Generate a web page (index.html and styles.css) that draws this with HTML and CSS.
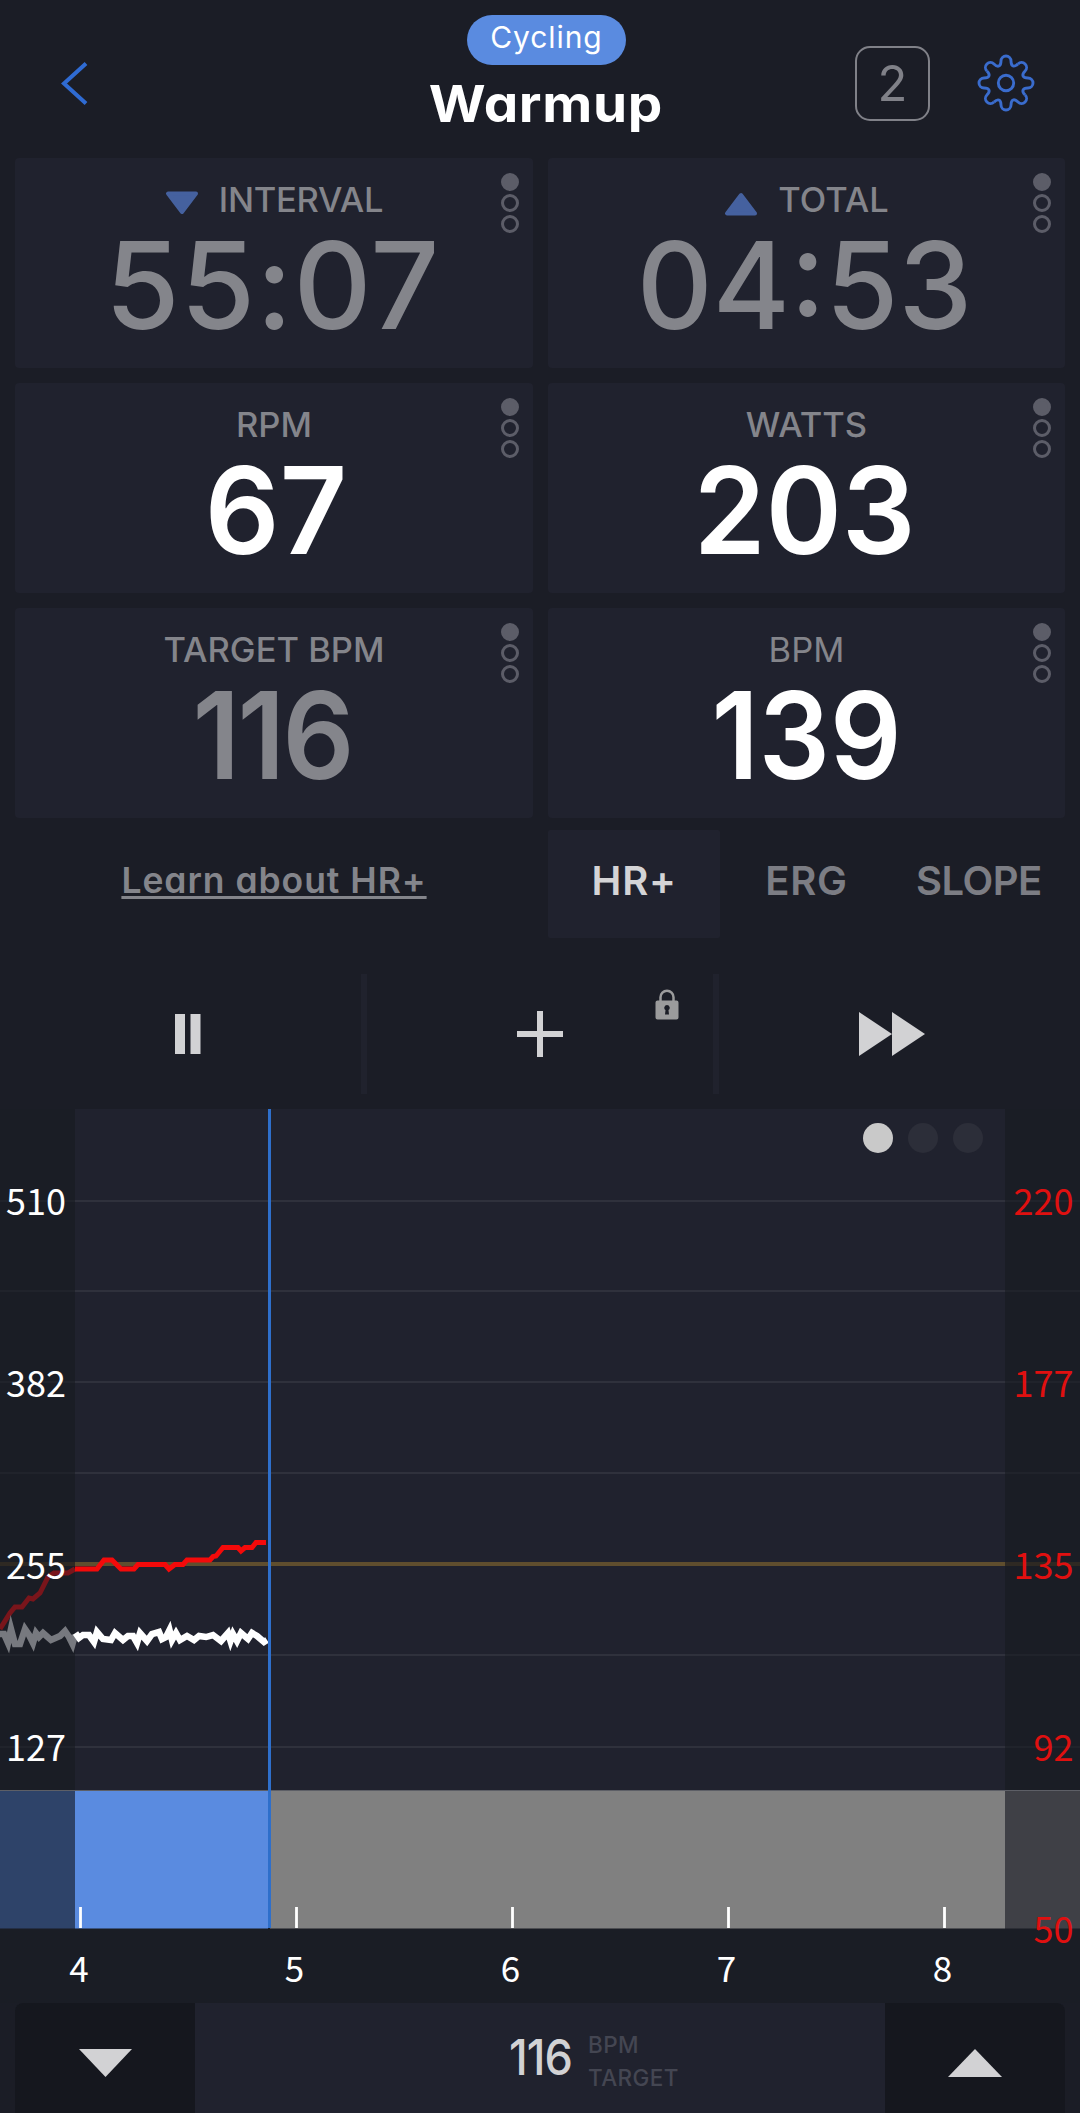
FILE: index.html
```
<!DOCTYPE html>
<html lang="en">
<head>
<meta charset="utf-8">
<title>Warmup</title>
<link rel="stylesheet" href="styles.css">
</head>
<body>
<div class="app">
  <header class="header">
    <div class="back">
      <svg width="32" height="46" viewBox="0 0 32 46"><path d="M29 3.500 7 23.500l22 20" class="chevron"/></svg>
    </div>
    <div class="title">
      <span class="pill"><span class="pill-text">Cycling</span></span>
      <h1>Warmup</h1>
    </div>
    <div class="tools">
      <div class="count">2</div>
      <svg class="gear" width="62" height="62" viewBox="-31 -31 62 62">
        <defs><path id="tooth" d="M-5-22A5 5 0 0 1 5-22C5-16.5 8.1-15.2 12-19.1"/></defs>
        <use href="#tooth"/><use href="#tooth" transform="rotate(45)"/>
        <use href="#tooth" transform="rotate(90)"/><use href="#tooth" transform="rotate(135)"/>
        <use href="#tooth" transform="rotate(180)"/><use href="#tooth" transform="rotate(225)"/>
        <use href="#tooth" transform="rotate(270)"/><use href="#tooth" transform="rotate(315)"/>
        <circle r="7.7"/>
      </svg>
    </div>
  </header>

  <main class="metrics">
    <section class="card">
      <div class="label"><svg class="tri" width="34" height="24" viewBox="0 0 34 24"><path d="M3 2.5H31L17 21Z"/></svg><span class="l-interval">INTERVAL</span></div>
      <div class="value time t-interval">55:07</div>
      <div class="pager"><i class="on"></i><i></i><i></i></div>
    </section>
    <section class="card">
      <div class="label"><svg class="tri up" width="34" height="24" viewBox="0 0 34 24"><path d="M3 21.5H31L17 3Z"/></svg><span class="l-total">TOTAL</span></div>
      <div class="value time t-total">04:53</div>
      <div class="pager"><i class="on"></i><i></i><i></i></div>
    </section>
    <section class="card">
      <div class="label">RPM</div>
      <div class="value v-rpm">67</div>
      <div class="pager"><i class="on"></i><i></i><i></i></div>
    </section>
    <section class="card">
      <div class="label">WATTS</div>
      <div class="value v-watts">203</div>
      <div class="pager"><i class="on"></i><i></i><i></i></div>
    </section>
    <section class="card">
      <div class="label">TARGET BPM</div>
      <div class="value muted v-target">116</div>
      <div class="pager"><i class="on"></i><i></i><i></i></div>
    </section>
    <section class="card">
      <div class="label light">BPM</div>
      <div class="value v-bpm">139</div>
      <div class="pager"><i class="on"></i><i></i><i></i></div>
    </section>
  </main>

  <div class="modes">
    <div class="learn"><a>Learn about HR+</a></div>
    <nav class="tabs">
      <div class="tab active">HR+</div>
      <div class="tab">ERG</div>
      <div class="tab slope">SLOPE</div>
    </nav>
  </div>

  <div class="controls">
    <div class="control"><svg width="26" height="40" viewBox="0 0 26 40"><path d="M0 0h10v40H0zM15.500 0h10v40h-10z"/></svg></div>
    <div class="control">
      <svg width="46" height="46" viewBox="0 0 46 46"><path d="M20 0h6v20h20v6H26v20h-6V26H0v-6h20z"/></svg>
      <svg class="lock" width="24" height="32" viewBox="0 0 24 32">
        <path class="shackle" d="M5.500 13V8.200a6.500 6.500 0 0 1 13 0V13"/>
        <path fill-rule="evenodd" d="M2.500 11.500h19a2 2 0 0 1 2 2v15a2 2 0 0 1-2 2h-19a2 2 0 0 1-2-2v-15a2 2 0 0 1 2-2zM12 16a2.800 2.800 0 0 0-1.500 5.100L10 25.500h4l-.5-4.400A2.800 2.800 0 0 0 12 16z"/>
      </svg>
    </div>
    <div class="control"><svg width="66" height="44" viewBox="0 0 66 44"><path d="M0 0 33 22 0 44zM33 0 66 22 33 44z"/></svg></div>
  </div>

  <svg class="chart" width="1080" height="894" viewBox="0 1109 1080 894">
    <rect class="plot" x="75" y="1109" width="930" height="681"/>
    <path class="grid side" d="M0 1201H75M0 1291H75M0 1382H75M0 1473H75M0 1655H75M0 1747H75M1005 1201h75M1005 1291h75M1005 1382h75M1005 1473h75M1005 1655h75M1005 1747h75"/>
    <path class="grid" d="M75 1201H1005M75 1291H1005M75 1382H1005M75 1473H1005M75 1655H1005M75 1747H1005"/>
    <path class="target side" d="M0 1564H75M1005 1564h75"/>
    <path class="target" d="M75 1564H1005"/>
    <rect x="0" y="1790" width="75" height="138.500" fill="#2e4369"/>
    <rect x="75" y="1790" width="193" height="138.500" fill="#5a8be0"/>
    <rect x="270" y="1790" width="735" height="138.500" fill="#808080"/>
    <rect x="1005" y="1790" width="75" height="138.500" fill="#3f4046"/>
    <path class="edge" d="M0 1790.500H1080"/>
    <path class="ticks" d="M80.500 1907v21M296.500 1907v21M512.500 1907v21M728.500 1907v21M944.500 1907v21"/>
    <path class="hr past" d="M0 1629 10 1613 15 1607H22L29 1598 33 1599 40 1593 48 1577 54 1573H68L75 1569"/>
    <path class="hr" d="M75 1569H97L104 1560H112L121 1569H134L138 1564.500H165L169 1569 175 1564.500H183L187 1560H210L213 1556.500 216 1556 223 1547.500H238L241 1551 245 1547.500H252L256 1542.500H266"/>
    <path class="power past" d="M0 1634H4L8 1643 11 1629 15 1644H20L25 1629 29 1635 33 1643 36 1633 39 1637 43 1633 51 1640 60 1636 65 1631 69 1637 72.500 1644 75 1635"/>
    <path class="power" d="M75.500 1633 79 1638 83 1635H89L94 1642 97 1632 103 1639 111 1640 115 1633 123 1640 128 1636H133L137 1643 140 1633 147 1641 152 1634 159 1632 162 1639 166 1637 169.500 1630 172 1640 176 1633 180 1640 187 1636 194 1640 199 1636 206 1637 213 1635 221 1641 228 1633 230.500 1641 233 1634 237 1641 241 1633 248 1639 252 1633 257 1636 264 1642 267 1640"/>
    <path class="now" d="M269.500 1109V1928"/>
    <circle cx="878" cy="1138" r="15" fill="#c9c9c9"/>
    <circle cx="923" cy="1138" r="15" fill="#2c2e39"/>
    <circle cx="968" cy="1138" r="15" fill="#2c2e39"/>
    <g class="axis">
      <text x="6" y="1215">510</text><text x="6" y="1397">382</text>
      <text x="6" y="1579">255</text><text x="6" y="1761">127</text>
    </g>
    <g class="axis right">
      <text x="1073.500" y="1215">220</text><text x="1073.500" y="1397">177</text>
      <text x="1073.500" y="1579">135</text><text x="1073.500" y="1761">92</text>
      <text x="1073.500" y="1943">50</text>
    </g>
    <g class="axis minutes">
      <text x="79" y="1982">4</text><text x="294.500" y="1982">5</text>
      <text x="510.500" y="1982">6</text><text x="726.500" y="1982">7</text>
      <text x="942.500" y="1982">8</text>
    </g>
  </svg>

  <footer class="adjust">
    <div class="step"><svg width="53" height="28" viewBox="0 0 53 28"><path d="M0 0H53L26.500 28Z"/></svg></div>
    <div class="reading">
      <span class="amount">116</span>
      <span class="unit"><span>BPM</span><span>TARGET</span></span>
    </div>
    <div class="step"><svg width="54" height="28" viewBox="0 0 54 28"><path d="M0 28H54L27 0Z"/></svg></div>
  </footer>
</div>
</body>
</html>
```
FILE: styles.css
```
* { box-sizing: border-box; }
body {
  margin: 0;
  background: #1b1d26;
  color: #fff;
  font-family: Inter, "Open Sans", sans-serif;
  font-feature-settings: "cv11" 1;
}
.app { width: 1080px; height: 2113px; overflow: hidden; display: flex; flex-direction: column; }
svg { display: block; flex: none; }

.header { height: 158px; flex: none; display: grid; grid-template-columns: 432px 228px 1fr; }
.back { padding: 60px 0 0 57px; }
.chevron { fill: none; stroke: #2f6bd3; stroke-width: 4; }
.title { display: flex; flex-direction: column; align-items: center; padding-top: 15px; }
.pill { height: 50px; width: 159px; border-radius: 25px; background: #5a8be0; text-align: center; }
.pill-text { display: block; font-size: 30px; line-height: 44px; letter-spacing: .9px; margin-right: -.9px; }
h1 {
  margin: 0; font-size: 51px; line-height: 78px; font-weight: 650; letter-spacing: .6px;
  transform: scaleX(1.075);
}
.tools { display: flex; align-items: flex-start; padding: 46px 0 0 195px; }
.count {
  width: 75px; height: 75px; border: 2.500px solid #808188; border-radius: 15px;
  color: #808188; font-size: 49px; line-height: 71px; text-align: center;
}
.gear { margin: 6px 0 0 45px; fill: none; stroke: #3a6ccd; stroke-width: 2.900; }

.metrics { display: grid; grid-template-columns: 518px 517px; grid-auto-rows: 210px; gap: 15px; padding: 0 15px; flex: none; }
.card { background: #20222e; border-radius: 4px; text-align: center; position: relative; }
.label {
  display: flex; justify-content: center; align-items: center;
  font-size: 34.500px; line-height: 83px; height: 83px; font-weight: 500; color: #84858b;
}
.label.light { font-weight: 400; }
.tri { margin: 6px 20px 0 0; fill: #45619f; stroke: #45619f; stroke-width: 4; stroke-linejoin: round; }
.tri.up { margin-top: 8px; }
.l-interval { letter-spacing: -.25px; }
.value { font-size: 121px; line-height: 88px; font-weight: 600; }
.time { font-weight: 500; color: #84858b; }
.muted { color: #84858b; }
.t-interval { letter-spacing: .8px; padding-right: 3px; }
.t-total { transform: scaleX(.973); padding-right: 4px; }
.v-rpm { transform: scaleX(.967); padding-left: 4px; }
.v-watts { transform: scaleX(.954); padding-right: 4px; }
.v-target { transform: scaleX(.93); letter-spacing: -2.800px; padding-right: 4px; }
.v-bpm { transform: scaleX(.925); }
.pager { position: absolute; top: 15px; right: 14px; display: flex; flex-direction: column; gap: 3px; }
.pager i { width: 18px; height: 18px; border: 3px solid #5c5d68; border-radius: 50%; }
.pager .on { background: #5c5d68; }

.modes { display: flex; height: 108px; margin: 12px 15px 0; flex: none; }
.learn { width: 533px; text-align: center; padding-right: 15px; font-size: 35.500px; font-weight: 600; line-height: 101px; color: #84858b; }
.learn a { letter-spacing: .95px; text-decoration: underline; text-decoration-thickness: 2.500px; text-underline-offset: 3px; text-decoration-skip-ink: none; }
.tabs { flex: 1; display: grid; grid-template-columns: repeat(3, 1fr); }
.tab { text-align: center; font-size: 40px; font-weight: 600; line-height: 102px; color: #7c7d84; letter-spacing: .8px; }
.tab.active { background: #20222e; color: #d4d4d6; border-radius: 2px; }
.tab.slope { letter-spacing: -.5px; }

.controls { display: flex; height: 120px; margin: 36px 15px 15px; flex: none; }
.control { flex: 1; display: flex; align-items: center; justify-content: center; position: relative; fill: #d2d2d4; }
.control + .control { border-left: 6px solid #20222d; flex: 1 0 6px; }
.lock { position: absolute; left: 288px; top: 15px; fill: #9b9b9c; }
.shackle { fill: none; stroke: #9b9b9c; stroke-width: 2.500; }

.chart { background: #1a1d25; }
.plot { fill: #20222e; }
.grid { stroke: #2f313c; stroke-width: 2; }
.grid.side { stroke: #20232b; }
.target { stroke: #5f4e2e; stroke-width: 4; }
.target.side { stroke: #2e2923; }
.edge { stroke: #5d5f66; stroke-width: 1; }
.ticks { stroke: #fff; stroke-width: 2.800; }
.hr { fill: none; stroke: #f40a0a; stroke-width: 5; }
.hr.past { stroke: #79151b; }
.power { fill: none; stroke: #fff; stroke-width: 6.500; stroke-miterlimit: 8; }
.power.past { stroke: #77797f; }
.now { stroke: #2e6fcb; stroke-width: 3; }
.axis { fill: #fff; font: 36px "Noto Sans CJK JP", "Noto Sans", sans-serif; }
.axis.right { fill: #e01010; text-anchor: end; }
.axis.minutes { font-size: 35px; text-anchor: middle; }

.adjust { height: 110px; flex: none; margin: 0 15px; display: flex; background: #20222e; border-radius: 8px 8px 0 0; overflow: hidden; }
.step { width: 180px; background: #15171e; display: flex; justify-content: center; padding-top: 46px; fill: #d2d2d4; }
.reading { flex: 1; display: flex; padding-left: 314px; }
.amount {
  width: 79px; font-size: 49px; font-weight: 500; line-height: 110px; letter-spacing: -1px; color: #d2d2d4;
  transform: scaleX(.92); transform-origin: 0 50%;
}
.unit { display: flex; flex-direction: column; font-size: 22.500px; line-height: 33px; font-weight: 500; letter-spacing: .4px; color: #444652; padding-top: 25px; }
```
